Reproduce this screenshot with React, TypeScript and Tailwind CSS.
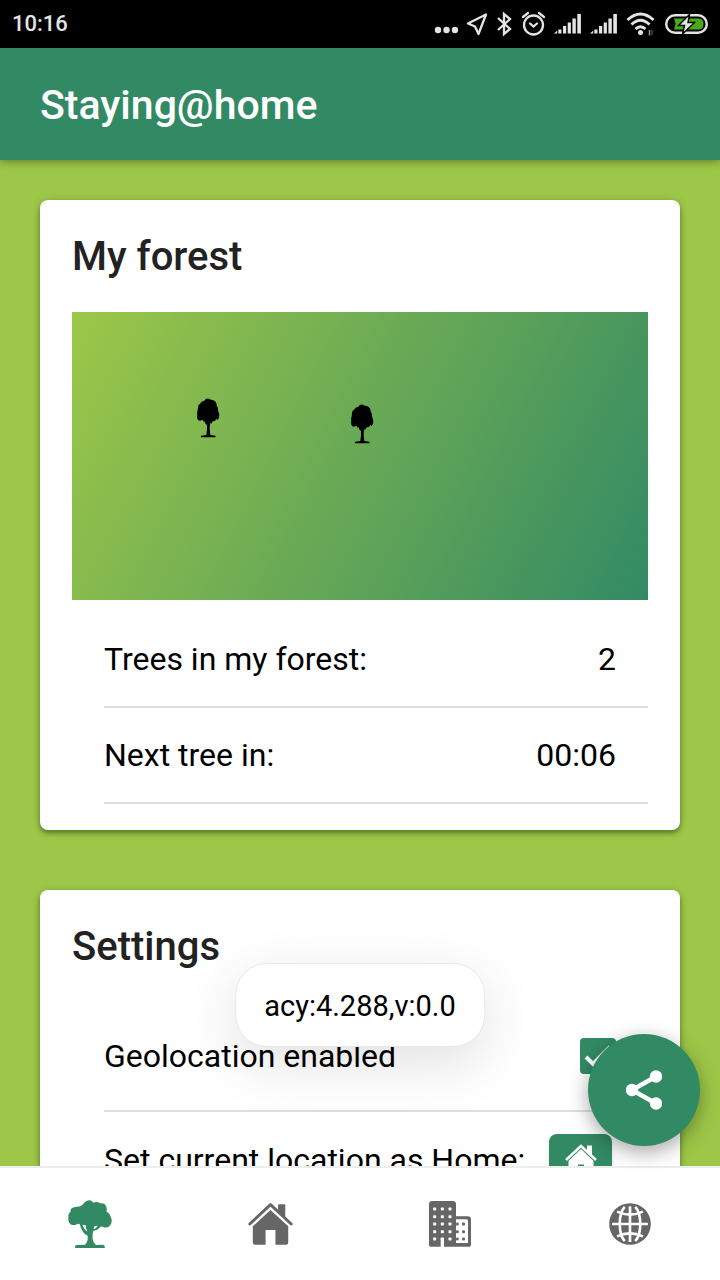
import React from "react";

type IconProps = { className?: string };

function StatusIcons() {
  return (
    <div className="flex items-center gap-2" aria-hidden="true">
      <svg width="24" height="26" viewBox="0 0 24 26" fill="#e4e4e4">
        <circle cx="4" cy="19" r="3.200" />
        <circle cx="12.500" cy="19" r="3.200" />
        <circle cx="21" cy="19" r="3.200" />
      </svg>
      <svg width="22" height="26" viewBox="0 0 22 26" fill="none" stroke="#e4e4e4" strokeWidth="2.300" strokeLinejoin="round">
        <path d="M20 3.500 L2 12.500 L9 15.500 L12.500 23 Z" />
      </svg>
      <svg width="17" height="26" viewBox="0 0 17 26" fill="none" stroke="#e4e4e4" strokeWidth="2.300">
        <path d="M2 7 L14 18 L8 23 V3 L14 8 L2 19" />
      </svg>
      <svg width="25" height="26" viewBox="0 0 25 26" fill="none" stroke="#e4e4e4" strokeWidth="2.300" strokeLinecap="round">
        <circle cx="12.500" cy="14" r="9.500" />
        <path d="M9 12.500 L12.500 15.500 L16 12.500" />
        <path d="M2 6 L7 2 M23 6 L18 2" />
      </svg>
      <SignalIcon className="w-7" />
      <SignalIcon className="w-7" />
      <svg width="31" height="26" viewBox="0 0 31 26" fill="none" stroke="#e4e4e4" strokeWidth="3">
        <path d="M1.500 9 Q14.500 -3 27.500 9" />
        <path d="M5.500 13.500 Q14.500 5 23.500 13.500" />
        <path d="M9.500 18 Q14.500 13.500 19.500 18" />
        <circle cx="14.500" cy="21.500" r="2.500" fill="#e4e4e4" stroke="none" />
        <path d="M23.500 19 V24.500" stroke="#999" strokeWidth="1.500" />
        <path d="M26 19 V24" stroke="#444" strokeWidth="1.500" />
      </svg>
      <svg width="43" height="26" viewBox="0 0 43 26">
        <rect x="1.200" y="4.200" width="40.600" height="17.600" rx="8.800" fill="none" stroke="#e4e4e4" strokeWidth="2.400" />
        <path d="M9 7.500 H34 Q38.500 8 38.500 13 Q38.500 18 34 18.500 H9 L10.500 13 Z" fill="#48a91b" />
        <path d="M24.500 3.500 L13.500 14.500 H19.500 L17.500 23 L29.500 11.500 H23 Z" fill="#e4e4e4" stroke="#000" strokeWidth="1.400" />
      </svg>
    </div>
  );
}

function SignalIcon({ className }: IconProps) {
  return (
    <svg className={className} height="26" viewBox="0 0 28 26" fill="#e4e4e4">
      <path d="M0 22.500 L3.200 19.500 V22.500 Z" />
      <rect x="4.300" y="18.500" width="3.200" height="4" />
      <rect x="9" y="15" width="3.200" height="7.500" />
      <rect x="13.700" y="11.500" width="3.200" height="11" />
      <rect x="18.400" y="7.500" width="3.400" height="15" />
      <rect x="23.300" y="3" width="3.600" height="19.500" />
    </svg>
  );
}

function TreeIcon({ className }: IconProps) {
  return (
    <svg className={className} viewBox="84 59 132 145" fill="currentColor" aria-hidden="true">
      <path d="M105 198 Q106 194 114 195 L135 194 Q142 188 143 179 V167 Q126 160 119 132 Q114 129 109 133 Q99 137 91 132 Q82 126 85 110 Q83 99 91 95 Q90 81 106 80 Q113 78 119 79 Q127 76 132 68 Q140 59 148 60 Q155 60 160 67 Q171 63 181 69 Q194 67 198 76 Q202 83 200 94 Q209 99 212 109 Q218 120 214 130 Q207 146 191 141 Q184 137 179 143 Q174 150 160 153 Q157 158 158 177 Q159 189 168 195 L190 194 Q195 195 195 204 H105 Z" />
      <path d="M127 134 Q135 136 137 135 Q138 146 142 155 Q131 148 127 134 Z M163 138 L173 137 Q170 145 161 147 Z" fill="white" />
    </svg>
  );
}

function HouseIcon({ className }: IconProps) {
  return (
    <svg className={className} viewBox="622 68 136 128" fill="currentColor" aria-hidden="true">
      <path d="M713 75 Q713 72 716 72 H732 Q735 72 735 75 V113 L713 92 Z" />
      <path d="M627 132 L690 73 L753 132" stroke="currentColor" strokeWidth="9" strokeLinecap="round" strokeLinejoin="round" fill="none" />
      <path d="M690 89 L744 139 V188 Q744 195 737 195 H705 V150 H675 V195 H643 Q636 195 636 188 V139 Z" />
    </svg>
  );
}

function BuildingIcon({ className }: IconProps) {
  const columns = [104, 127, 150];
  const rows = [87, 110, 132, 155, 177];
  return (
    <svg className={className} viewBox="87 63 126 138" fill="currentColor" aria-hidden="true">
      <path d="M97 63 H158 Q168 63 168 73 V109 H203 Q213 109 213 119 V195 Q213 200 208 200 H132 V174 H122 V200 H92 Q87 200 87 195 V73 Q87 63 97 63 Z" />
      <path d="M168 118 H199 Q204 118 204 123 V189 H168 Z" fill="white" />
      {rows.map((y) => columns.map((x) => <rect key={`${x}-${y}`} x={x - 4.5} y={y - 4.5} width="9" height="9" rx="2" fill="white" />))}
      {[132, 155, 177].map((y) => (
        <g key={y}>
          <rect x="168" y={y - 4.5} width="8" height="9" rx="3" />
          <rect x="186" y={y - 4.5} width="9" height="9" rx="3" />
        </g>
      ))}
    </svg>
  );
}

function GlobeIcon({ className }: IconProps) {
  return (
    <svg className={className} viewBox="627 68 126 127" aria-hidden="true">
      <circle cx="690" cy="131.500" r="63" fill="currentColor" />
      <g fill="none" stroke="white" strokeWidth="8">
        <path d="M690 78 V186 M636 131.500 H744" />
        <path d="M674 80 Q659 96 659 131.500 Q659 167 674 183 M706 80 Q721 96 721 131.500 Q721 167 706 183" />
        <path d="M651 94 Q690 112 729 94 M651 169 Q690 151 729 169" />
      </g>
    </svg>
  );
}

function ForestTree({ className }: IconProps) {
  return (
    <svg className={className} viewBox="50 54 68 118" fill="#000" role="img" aria-label="Tree">
      <path d="M52 108 Q51 94 54 88 Q54 74 60 72 Q64 63 73 62 Q78 54 87 56 Q92 60 100 61 Q109 65 110 77 Q114 82 114 92 Q119 101 117 111 L113 119 L109 116 L104 122 L97 123 L95 130 L91 127 L89 138 Q89 155 91 163 L106 165 V170 H63 V165 L79 163 Q82 147 81 134 L77 131 L74 123 L71 124 L69 119 L58 121 Q51 118 52 108 Z" />
    </svg>
  );
}

const tabs = [
  { label: "Forest", Icon: TreeIcon, active: true, size: "w-11 h-12" },
  { label: "Home", Icon: HouseIcon, active: false, size: "w-[45px] h-[42px]" },
  { label: "City", Icon: BuildingIcon, active: false, size: "w-[42px] h-[46px]" },
  { label: "World", Icon: GlobeIcon, active: false, size: "w-[42px] h-[42px]" },
];

const card = "rounded-lg bg-white p-8 shadow-[0_3px_5px_rgba(0,0,0,0.35),0_1px_10px_rgba(0,0,0,0.14)]";
const cardTitle = "pt-[2px] text-[40px] leading-[46px] font-medium text-[#222]";
const row = "flex items-center justify-between border-b-2 border-[#dedede] pr-8";

export default function App() {
  return (
    <div className="relative flex h-screen flex-col overflow-hidden bg-[#9dc748] font-['Roboto',sans-serif] text-[32px] leading-10 text-black">
      <div className="flex h-12 shrink-0 items-center justify-between bg-black px-3">
        <time className="text-[22px] font-medium text-[#e4e4e4]">10:16</time>
        <StatusIcons />
      </div>
      <header className="z-10 flex h-28 shrink-0 items-center bg-[#328a64] px-10 pt-[2px] shadow-[0_2px_8px_rgba(0,0,0,0.35)]">
        <h1 className="text-[41px] font-medium text-white">Staying@home</h1>
      </header>

      <main className="flex min-h-0 flex-1 flex-col gap-[60px] overflow-y-auto px-10 pt-10 [scrollbar-width:none]">
        <section className={`${card} shrink-0 pb-[26px]`}>
          <h2 className={cardTitle}>My forest</h2>
          <div className="relative mt-8 aspect-[2/1] bg-[linear-gradient(117deg,#9dc748,#328a64)]">
            <ForestTree className="absolute top-[30%] left-[21.5%] h-10 w-6" />
            <ForestTree className="absolute top-[32%] left-[48.2%] h-10 w-6" />
          </div>
          <dl className="mt-3 pl-8">
            <div className={`${row} h-24`}>
              <dt>Trees in my forest:</dt>
              <dd>2</dd>
            </div>
            <div className={`${row} h-24`}>
              <dt>Next tree in:</dt>
              <dd>00:06</dd>
            </div>
          </dl>
        </section>

        <section className={`${card} shrink-0`}>
          <h2 className={cardTitle}>Settings</h2>
          <div className="mt-8 pl-8">
            <div className={`${row} h-[110px]`}>
              <label htmlFor="geolocation">Geolocation enabled</label>
              <span className="grid">
                <input id="geolocation" type="checkbox" defaultChecked className="peer col-start-1 row-start-1 size-9 appearance-none rounded border-2 border-[#328a64] checked:bg-[#328a64]" />
                <svg className="pointer-events-none invisible col-start-1 row-start-1 size-9 peer-checked:visible" viewBox="0 0 36 36" fill="none" stroke="white" strokeWidth="4" aria-hidden="true">
                  <path d="M6 19 L13 26 L30 9" />
                </svg>
              </span>
            </div>
            <div className={`${row} h-[98px]`}>
              <label htmlFor="set-home">Set current location as Home:</label>
              <button id="set-home" type="button" className="mr-1 flex h-[52px] w-[63px] items-center justify-center rounded-lg bg-[#328a64] text-white shadow-md">
                <svg className="h-8 w-8" viewBox="0 0 32 32" fill="currentColor" aria-hidden="true">
                  <path d="M22 1.500 H27 V12 L22 7 Z" />
                  <path d="M1 16 L16 2 L31 16" fill="none" stroke="currentColor" strokeWidth="2.500" />
                  <path d="M16 5 L28.500 17 V30 H19 V20.500 H13 V30 H3.500 V17 Z" />
                </svg>
              </button>
            </div>
          </div>
        </section>
      </main>

      <nav className="z-10 grid h-[114px] shrink-0 grid-cols-4 border-t-2 border-[#ededed] bg-white">
        {tabs.map(({ label, Icon, active, size }) => (
          <button key={label} type="button" aria-label={label} className={`flex items-center justify-center ${active ? "text-[#328a64]" : "text-[#666]"}`}>
            <Icon className={size} />
          </button>
        ))}
      </nav>

      <div role="status" className="absolute bottom-[233px] left-1/2 z-20 -translate-x-1/2 rounded-[32px] border border-[#e8e8e8] bg-white px-7 pt-[22px] pb-5 text-[29px] leading-10 whitespace-nowrap shadow-[0_16px_56px_rgba(0,0,0,0.12)]">
        acy:4.288,v:0.0
      </div>
      <button type="button" aria-label="Share" className="absolute right-5 bottom-[134px] z-20 flex size-28 items-center justify-center rounded-full bg-[#328a64] shadow-[0_6px_20px_rgba(0,0,0,0.35)]">
        <svg className="h-10 w-9" viewBox="0 0 36 40" fill="white" stroke="white" strokeWidth="4.500" aria-hidden="true">
          <path d="M30 6.500 L6 20 L30 33.500" fill="none" />
          <circle cx="30" cy="6.500" r="6.200" stroke="none" />
          <circle cx="6" cy="20" r="6.200" stroke="none" />
          <circle cx="30" cy="33.500" r="6.200" stroke="none" />
        </svg>
      </button>
    </div>
  );
}
